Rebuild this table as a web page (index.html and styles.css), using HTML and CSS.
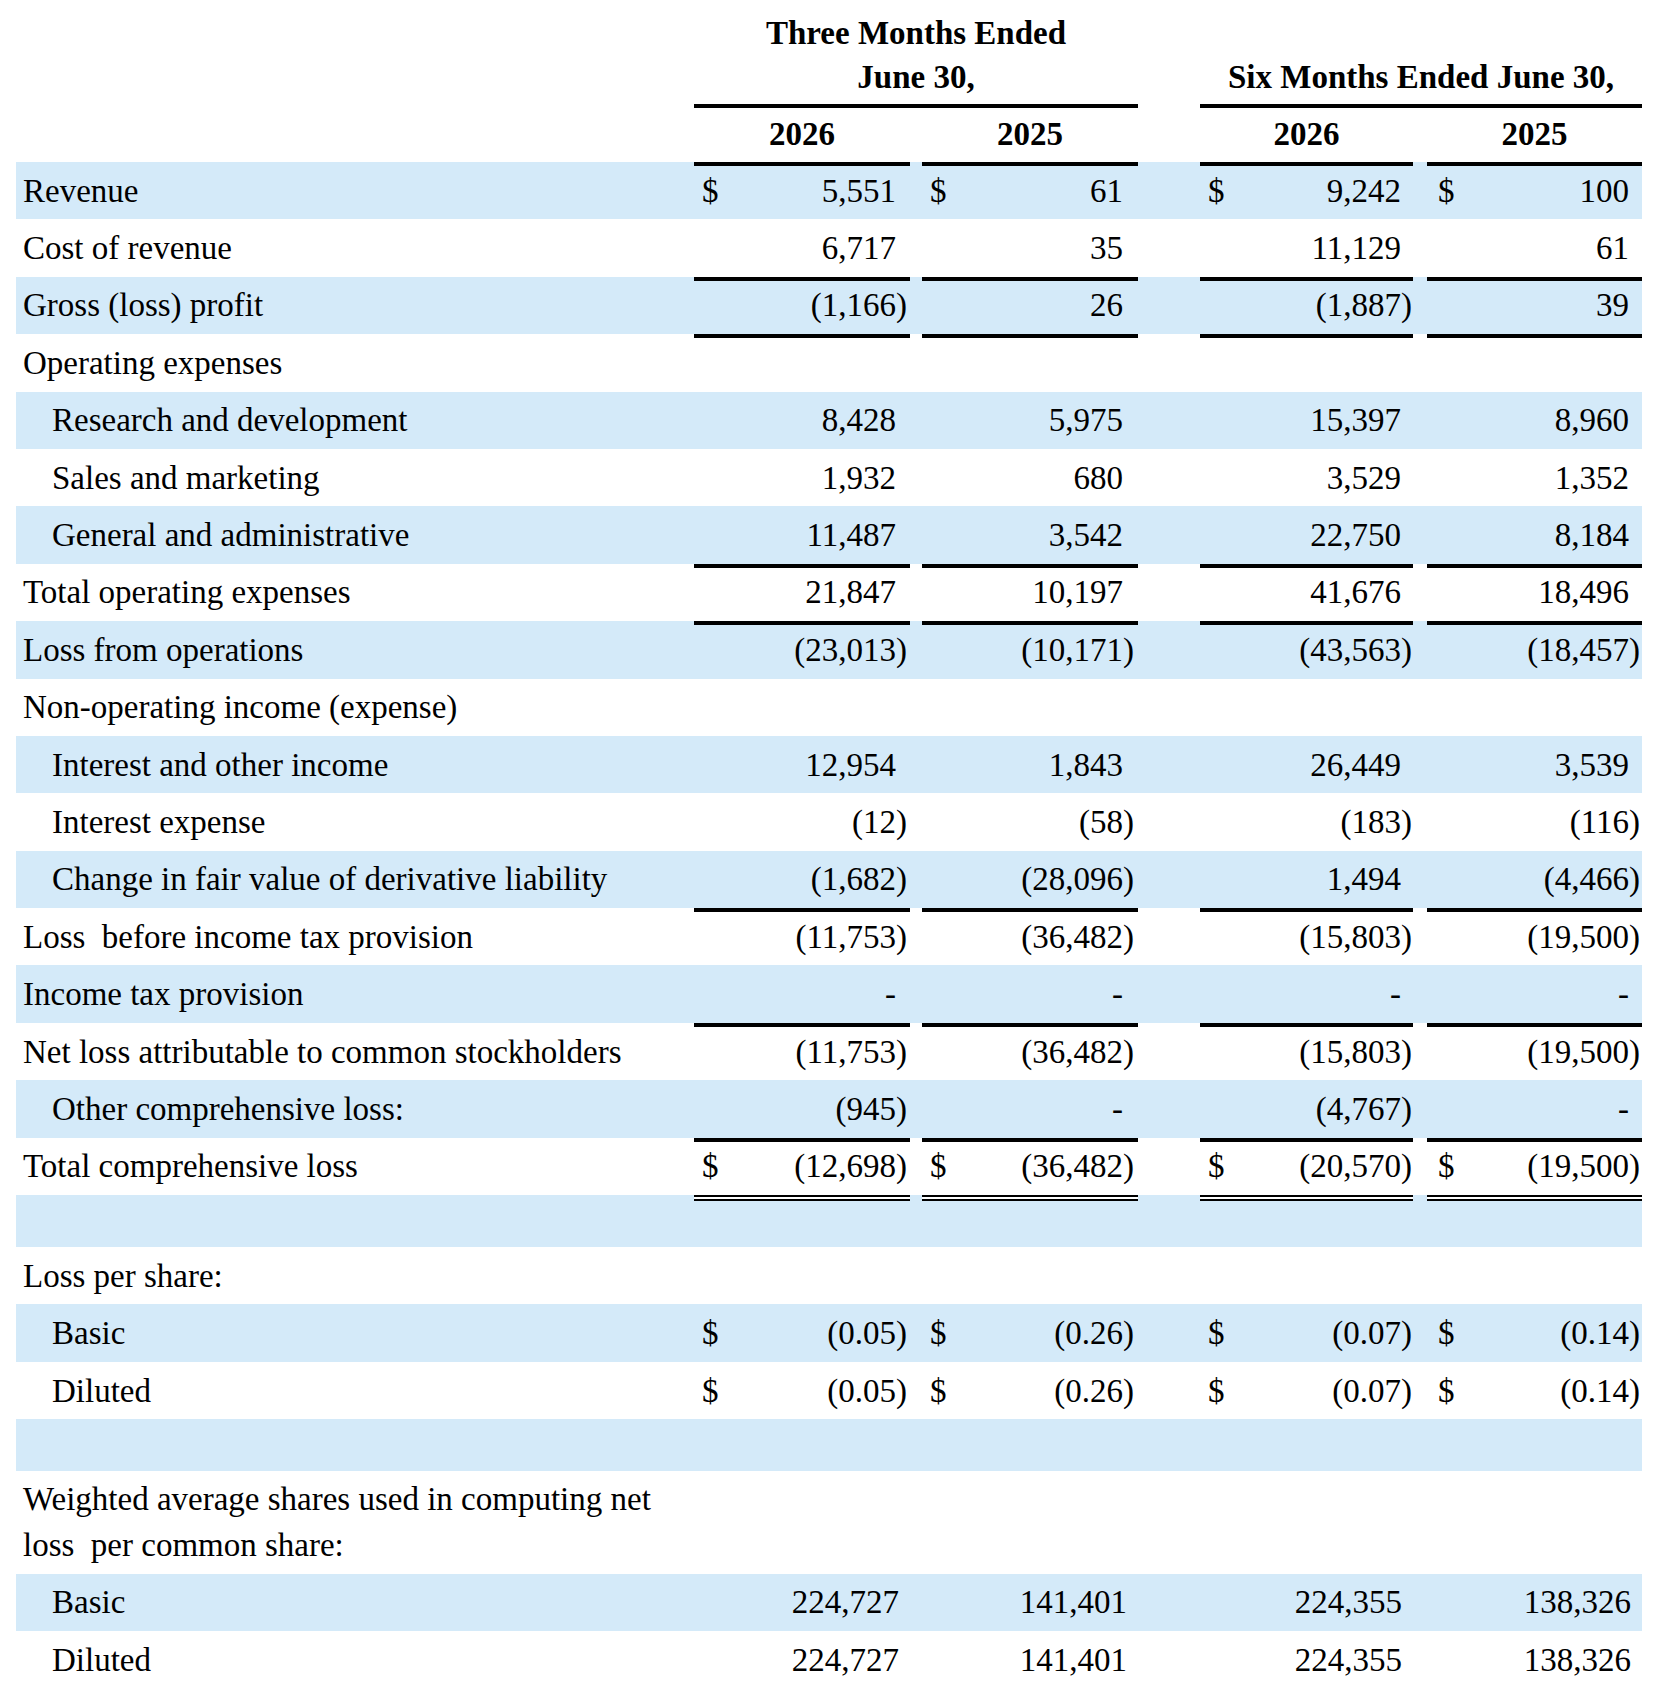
FILE: index.html
```html
<!DOCTYPE html>
<html lang="en">
<head>
    <meta charset="UTF-8">
    <title>Condensed Statements of Operations and Comprehensive Loss</title>
    <link rel="stylesheet" href="styles.css">
</head>
<body>
    <table class="statement">
        <colgroup>
            <col class="c-label">
            <col class="c-cur"><col class="c-num-a"><col class="c-par-a">
            <col class="c-gap-s">
            <col class="c-cur"><col class="c-num-b"><col class="c-par-b">
            <col class="c-gap-l">
            <col class="c-cur"><col class="c-num-c"><col class="c-par-c">
            <col class="c-gap-m">
            <col class="c-cur"><col class="c-num-d"><col class="c-par-d">
        </colgroup>
        <thead>
            <tr class="period">
                <td></td>
                <th colspan="7">Three Months Ended<br>June 30,</th>
                <td></td>
                <th colspan="7">Six Months Ended June 30,</th>
            </tr>
            <tr class="years">
                <td></td>
                <th colspan="3" class="rule">2026</th>
                <td class="rule"></td>
                <th colspan="3" class="rule">2025</th>
                <td></td>
                <th colspan="3" class="rule">2026</th>
                <td class="rule"></td>
                <th colspan="3" class="rule">2025</th>
            </tr>
        </thead>
        <tbody>
            <!-- revenue and gross profit -->
            <tr class="shade ruled">
                <td class="label">Revenue</td>
                <td class="cur">$</td><td class="num">5,551</td><td class="par"></td><td></td>
                <td class="cur">$</td><td class="num">61</td><td class="par"></td><td></td>
                <td class="cur">$</td><td class="num">9,242</td><td class="par"></td><td></td>
                <td class="cur cur-d">$</td><td class="num">100</td><td class="par"></td>
            </tr>
            <tr>
                <td class="label">Cost of revenue</td>
                <td class="cur"></td><td class="num">6,717</td><td class="par"></td><td></td>
                <td class="cur"></td><td class="num">35</td><td class="par"></td><td></td>
                <td class="cur"></td><td class="num">11,129</td><td class="par"></td><td></td>
                <td class="cur"></td><td class="num">61</td><td class="par"></td>
            </tr>
            <tr class="shade ruled">
                <td class="label">Gross (loss) profit</td>
                <td class="cur"></td><td class="num">(1,166</td><td class="par">)</td><td></td>
                <td class="cur"></td><td class="num">26</td><td class="par"></td><td></td>
                <td class="cur"></td><td class="num">(1,887</td><td class="par">)</td><td></td>
                <td class="cur"></td><td class="num">39</td><td class="par"></td>
            </tr>

            <!-- operating expenses -->
            <tr class="ruled">
                <td class="label">Operating expenses</td>
                <td class="cur"></td><td class="num"></td><td class="par"></td><td></td>
                <td class="cur"></td><td class="num"></td><td class="par"></td><td></td>
                <td class="cur"></td><td class="num"></td><td class="par"></td><td></td>
                <td class="cur"></td><td class="num"></td><td class="par"></td>
            </tr>
            <tr class="shade">
                <td class="label sub">Research and development</td>
                <td class="cur"></td><td class="num">8,428</td><td class="par"></td><td></td>
                <td class="cur"></td><td class="num">5,975</td><td class="par"></td><td></td>
                <td class="cur"></td><td class="num">15,397</td><td class="par"></td><td></td>
                <td class="cur"></td><td class="num">8,960</td><td class="par"></td>
            </tr>
            <tr>
                <td class="label sub">Sales and marketing</td>
                <td class="cur"></td><td class="num">1,932</td><td class="par"></td><td></td>
                <td class="cur"></td><td class="num">680</td><td class="par"></td><td></td>
                <td class="cur"></td><td class="num">3,529</td><td class="par"></td><td></td>
                <td class="cur"></td><td class="num">1,352</td><td class="par"></td>
            </tr>
            <tr class="shade">
                <td class="label sub">General and administrative</td>
                <td class="cur"></td><td class="num">11,487</td><td class="par"></td><td></td>
                <td class="cur"></td><td class="num">3,542</td><td class="par"></td><td></td>
                <td class="cur"></td><td class="num">22,750</td><td class="par"></td><td></td>
                <td class="cur"></td><td class="num">8,184</td><td class="par"></td>
            </tr>
            <tr class="ruled">
                <td class="label">Total operating expenses</td>
                <td class="cur"></td><td class="num">21,847</td><td class="par"></td><td></td>
                <td class="cur"></td><td class="num">10,197</td><td class="par"></td><td></td>
                <td class="cur"></td><td class="num">41,676</td><td class="par"></td><td></td>
                <td class="cur"></td><td class="num">18,496</td><td class="par"></td>
            </tr>
            <tr class="shade ruled">
                <td class="label">Loss from operations</td>
                <td class="cur"></td><td class="num">(23,013</td><td class="par">)</td><td></td>
                <td class="cur"></td><td class="num">(10,171</td><td class="par">)</td><td></td>
                <td class="cur"></td><td class="num">(43,563</td><td class="par">)</td><td></td>
                <td class="cur"></td><td class="num">(18,457</td><td class="par">)</td>
            </tr>

            <!-- non-operating -->
            <tr>
                <td class="label" colspan="16">Non-operating income (expense)</td>
            </tr>
            <tr class="shade">
                <td class="label sub">Interest and other income</td>
                <td class="cur"></td><td class="num">12,954</td><td class="par"></td><td></td>
                <td class="cur"></td><td class="num">1,843</td><td class="par"></td><td></td>
                <td class="cur"></td><td class="num">26,449</td><td class="par"></td><td></td>
                <td class="cur"></td><td class="num">3,539</td><td class="par"></td>
            </tr>
            <tr>
                <td class="label sub">Interest expense</td>
                <td class="cur"></td><td class="num">(12</td><td class="par">)</td><td></td>
                <td class="cur"></td><td class="num">(58</td><td class="par">)</td><td></td>
                <td class="cur"></td><td class="num">(183</td><td class="par">)</td><td></td>
                <td class="cur"></td><td class="num">(116</td><td class="par">)</td>
            </tr>
            <tr class="shade">
                <td class="label sub">Change in fair value of derivative liability</td>
                <td class="cur"></td><td class="num">(1,682</td><td class="par">)</td><td></td>
                <td class="cur"></td><td class="num">(28,096</td><td class="par">)</td><td></td>
                <td class="cur"></td><td class="num">1,494</td><td class="par"></td><td></td>
                <td class="cur"></td><td class="num">(4,466</td><td class="par">)</td>
            </tr>
            <tr class="ruled">
                <td class="label">Loss&nbsp; before income tax provision</td>
                <td class="cur"></td><td class="num">(11,753</td><td class="par">)</td><td></td>
                <td class="cur"></td><td class="num">(36,482</td><td class="par">)</td><td></td>
                <td class="cur"></td><td class="num">(15,803</td><td class="par">)</td><td></td>
                <td class="cur"></td><td class="num">(19,500</td><td class="par">)</td>
            </tr>
            <tr class="shade">
                <td class="label">Income tax provision</td>
                <td class="cur"></td><td class="num">-</td><td class="par"></td><td></td>
                <td class="cur"></td><td class="num">-</td><td class="par"></td><td></td>
                <td class="cur"></td><td class="num">-</td><td class="par"></td><td></td>
                <td class="cur"></td><td class="num">-</td><td class="par"></td>
            </tr>
            <tr class="ruled">
                <td class="label">Net loss attributable to common stockholders</td>
                <td class="cur"></td><td class="num">(11,753</td><td class="par">)</td><td></td>
                <td class="cur"></td><td class="num">(36,482</td><td class="par">)</td><td></td>
                <td class="cur"></td><td class="num">(15,803</td><td class="par">)</td><td></td>
                <td class="cur"></td><td class="num">(19,500</td><td class="par">)</td>
            </tr>
            <tr class="shade">
                <td class="label sub">Other comprehensive loss:</td>
                <td class="cur"></td><td class="num">(945</td><td class="par">)</td><td></td>
                <td class="cur"></td><td class="num">-</td><td class="par"></td><td></td>
                <td class="cur"></td><td class="num">(4,767</td><td class="par">)</td><td></td>
                <td class="cur"></td><td class="num">-</td><td class="par"></td>
            </tr>
            <tr class="ruled">
                <td class="label">Total comprehensive loss</td>
                <td class="cur">$</td><td class="num">(12,698</td><td class="par">)</td><td></td>
                <td class="cur">$</td><td class="num">(36,482</td><td class="par">)</td><td></td>
                <td class="cur">$</td><td class="num">(20,570</td><td class="par">)</td><td></td>
                <td class="cur cur-d">$</td><td class="num">(19,500</td><td class="par">)</td>
            </tr>
            <tr class="shade blank double">
                <td class="label"></td>
                <td class="cur"></td><td class="num"></td><td class="par"></td><td></td>
                <td class="cur"></td><td class="num"></td><td class="par"></td><td></td>
                <td class="cur"></td><td class="num"></td><td class="par"></td><td></td>
                <td class="cur"></td><td class="num"></td><td class="par"></td>
            </tr>

            <!-- per share -->
            <tr>
                <td class="label" colspan="16">Loss per share:</td>
            </tr>
            <tr class="shade">
                <td class="label sub">Basic</td>
                <td class="cur">$</td><td class="num">(0.05</td><td class="par">)</td><td></td>
                <td class="cur">$</td><td class="num">(0.26</td><td class="par">)</td><td></td>
                <td class="cur">$</td><td class="num">(0.07</td><td class="par">)</td><td></td>
                <td class="cur cur-d">$</td><td class="num">(0.14</td><td class="par">)</td>
            </tr>
            <tr>
                <td class="label sub">Diluted</td>
                <td class="cur">$</td><td class="num">(0.05</td><td class="par">)</td><td></td>
                <td class="cur">$</td><td class="num">(0.26</td><td class="par">)</td><td></td>
                <td class="cur">$</td><td class="num">(0.07</td><td class="par">)</td><td></td>
                <td class="cur cur-d">$</td><td class="num">(0.14</td><td class="par">)</td>
            </tr>
            <tr class="shade blank">
                <td colspan="16"></td>
            </tr>

            <!-- shares -->
            <tr class="tall">
                <td class="label" colspan="16">Weighted average shares used in computing net<br>loss&nbsp; per common share:</td>
            </tr>
            <tr class="shade">
                <td class="label sub">Basic</td>
                <td class="cur"></td><td class="num wide" colspan="2">224,727</td><td></td>
                <td class="cur"></td><td class="num wide" colspan="2">141,401</td><td></td>
                <td class="cur"></td><td class="num wide" colspan="2">224,355</td><td></td>
                <td class="cur"></td><td class="num wide" colspan="2">138,326</td>
            </tr>
            <tr>
                <td class="label sub">Diluted</td>
                <td class="cur"></td><td class="num wide" colspan="2">224,727</td><td></td>
                <td class="cur"></td><td class="num wide" colspan="2">141,401</td><td></td>
                <td class="cur"></td><td class="num wide" colspan="2">224,355</td><td></td>
                <td class="cur"></td><td class="num wide" colspan="2">138,326</td>
            </tr>
        </tbody>
    </table>
</body>
</html>
```

FILE: styles.css
```css
body {
    margin: 0;
    background-color: #fff;
    color: #000;
    font-family: "Liberation Serif", "Times New Roman", serif;
}
.statement {
    margin-left: 16px;
    width: 1626px;
    table-layout: fixed;
    border-collapse: separate;
    border-spacing: 0;
    font-size: 33px;
    line-height: 44px;
}
.statement td,
.statement th {
    padding: 0;
    white-space: nowrap;
    font-weight: normal;
}
.c-label { width: 678px; }
.c-cur { width: 40px; }
.c-num-a { width: 162px; }
.c-num-b { width: 161px; }
.c-num-c { width: 161px; }
.c-num-d { width: 162px; }
.c-par-a { width: 14px; }
.c-par-b { width: 15px; }
.c-par-c { width: 12px; }
.c-par-d { width: 13px; }
.c-gap-s { width: 12px; }
.c-gap-l { width: 62px; }
.c-gap-m { width: 14px; }

/* header */
.period {
    height: 104px;
}
.statement .period th {
    font-weight: bold;
    text-align: center;
    vertical-align: bottom;
    padding-bottom: 5px;
}
.years {
    height: 58px;
}
.statement .years th {
    font-weight: bold;
    text-align: center;
    padding-top: 2px;
}
.years .rule {
    box-shadow: inset 0 4px 0 #000;
}

/* body rows */
tbody tr {
    height: 57.4px;
}
tbody tr.blank {
    height: 52px;
}
tbody tr.tall {
    height: 102.3px;
}
.shade {
    background-color: #d4eaf9;
}
.statement .label {
    padding-left: 7px;
}
.statement .label.sub {
    padding-left: 36px;
}
.statement .tall .label {
    line-height: 46px;
    white-space: normal;
}
.statement .cur {
    padding-left: 8px;
}
.statement .cur-d {
    padding-left: 11px;
}
.statement .num {
    text-align: right;
}
.statement .num.wide {
    padding-right: 11px;
}
.statement .par {
    text-align: left;
}
.ruled .cur,
.ruled .num,
.ruled .par {
    box-shadow: inset 0 4px 0 #000;
}
.double .cur,
.double .num,
.double .par {
    box-shadow: inset 0 2px 0 #000, inset 0 4px 0 #fff, inset 0 6px 0 #000;
}
```
